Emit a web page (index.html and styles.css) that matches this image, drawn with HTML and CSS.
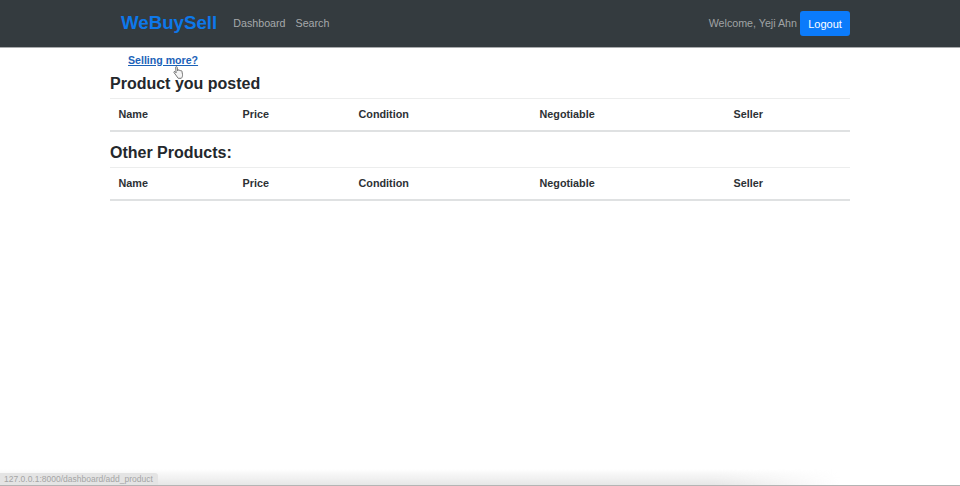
FILE: index.html
```html
<!DOCTYPE html>
<html lang="en">
<head>
<meta charset="utf-8">
<title>WeBuySell</title>
<link rel="stylesheet" href="styles.css">
</head>
<body>
<nav class="navbar">
  <div class="nav-inner">
    <a class="brand" href="#">WeBuySell</a>
    <a class="nav-link" href="#">Dashboard</a>
    <a class="nav-link" href="#">Search</a>
    <span class="welcome">Welcome, Yeji Ahn</span>
    <a class="logout" href="#">Logout</a>
  </div>
</nav>
<main class="container">
  <p class="sell"><a class="sell-link" href="#">Selling more?</a></p>
  <h2 class="title">Product you posted</h2>
  <table class="products">
    <thead><tr><th class="c1">Name</th><th class="c2">Price</th><th class="c3">Condition</th><th class="c4">Negotiable</th><th class="c5">Seller</th></tr></thead>
  </table>
  <h2 class="title">Other Products:</h2>
  <table class="products">
    <thead><tr><th class="c1">Name</th><th class="c2">Price</th><th class="c3">Condition</th><th class="c4">Negotiable</th><th class="c5">Seller</th></tr></thead>
  </table>
</main>
<svg class="cursor" width="12" height="14" viewBox="0 0 12 14" aria-hidden="true">
  <path d="M2.6 1.4c0-1 1.5-1 1.6 0l.4 3.4.3-.6c.5-.5 1.2-.3 1.3.3.4-.5 1.2-.3 1.3.3.5-.4 1.2-.2 1.4.4l.6 3.2c.2 1.6-.3 3-1.2 3.9H5.2L2.800 9 1 6.600c-.5-.8.4-1.500 1.100-.9l1 1.100z" fill="#f4f4f4" stroke="#555" stroke-width=".8" stroke-linejoin="round"/>
</svg>
<div class="bottom-shade"></div>
<div class="status">127.0.0.1:8000/dashboard/add_product</div>
</body>
</html>
```
FILE: styles.css
```css
* { box-sizing: border-box; }
html, body { height: 100%; }
body {
  margin: 0;
  background: #fff;
  color: #24282c;
  font-family: "Liberation Sans", Arial, sans-serif;
  overflow: hidden;
}
a { text-decoration: none; }
.navbar {
  height: 48px;
  background: #343b3f;
  border-bottom: 1px solid #a9abad;
}
.nav-inner {
  width: 740px;
  height: 47px;
  margin-left: 110px;
  display: flex;
  align-items: center;
}
.brand {
  margin-left: 11px;
  margin-right: 16px;
  padding-bottom: 2px;
  color: #0d78ea;
  font-size: 18.700px;
  font-weight: 700;
}
.nav-link {
  margin-right: 10px;
  padding-bottom: 2px;
  color: #a6a9ab;
  font-size: 10.700px;
}
.welcome {
  margin-left: auto;
  margin-right: 3px;
  padding-bottom: 2px;
  color: #a0a3a5;
  font-size: 10.700px;
}
.logout {
  width: 50px;
  height: 25px;
  display: flex;
  align-items: center;
  justify-content: center;
  background: #0b7bfb;
  border-radius: 3px;
  color: #fff;
  font-size: 11px;
}
.container {
  width: 740px;
  margin-left: 110px;
}
.sell {
  margin: 0;
  padding: 6px 0 0 18px;
  height: 26px;
  font-size: 10.600px;
  font-weight: 700;
}
.sell-link {
  color: #1b62b8;
  text-decoration: underline;
}
.title {
  margin: 0;
  height: 24px;
  line-height: 20px;
  font-size: 16px;
  font-weight: 700;
}
.products {
  width: 740px;
  margin-bottom: 11px;
  table-layout: fixed;
  border-collapse: separate;
  border-spacing: 0;
}
.products th {
  height: 34px;
  padding: 0 8.500px 2px;
  border-top: 1px solid #eceded;
  border-bottom: 2px solid #dfe1e2;
  color: #2d3135;
  font-size: 10.800px;
  font-weight: 700;
  text-align: left;
}
.c1 { width: 124px; }
.c2 { width: 116px; }
.c3 { width: 181px; }
.c4 { width: 194px; }
.c5 { width: 125px; }
.cursor {
  position: absolute;
  left: 173px;
  top: 66px;
}
.bottom-shade {
  position: fixed;
  left: 0;
  bottom: 1px;
  width: 840px;
  height: 16px;
  background: linear-gradient(to bottom, rgba(228,228,228,0), #e6e6e6);
  -webkit-mask-image: linear-gradient(to right, #000 85%, transparent 100%);
  mask-image: linear-gradient(to right, #000 85%, transparent 100%);
}
.status {
  position: fixed;
  left: 0;
  bottom: 1px;
  width: 158px;
  height: 12px;
  padding-left: 4px;
  background: #e4e4e4;
  border-top-right-radius: 3px;
  color: #a5a5a5;
  font-size: 8.500px;
  line-height: 12px;
  white-space: nowrap;
}
html::after {
  content: "";
  position: fixed;
  left: 0;
  right: 0;
  bottom: 0;
  height: 1px;
  background: #b4b4b4;
}
```
